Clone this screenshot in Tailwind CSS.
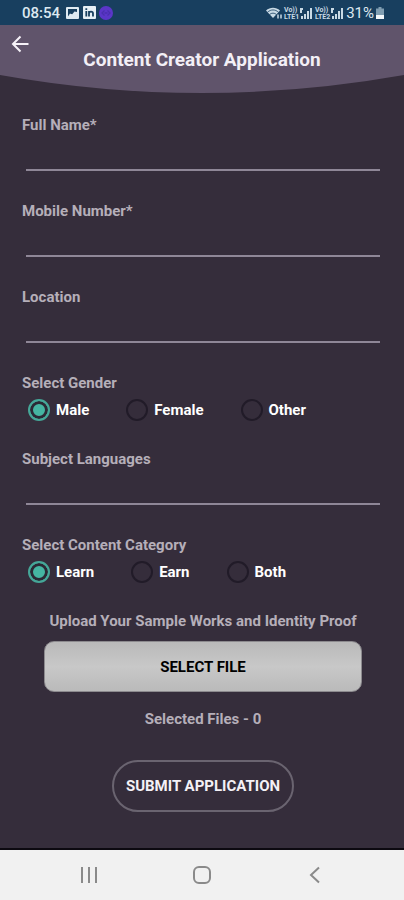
<!DOCTYPE html>
<html lang="en">
<head>
<meta charset="utf-8">
<meta name="viewport" content="width=device-width, initial-scale=1">
<title>Content Creator Application</title>
<script src="https://cdn.jsdelivr.net/npm/@tailwindcss/browser@4"></script>
</head>
<body class="flex min-h-screen flex-col bg-[#352d3b] font-[Roboto,sans-serif] text-[15px] leading-5 font-bold text-[#b5afb9]">
  <div class="flex h-[25px] items-center bg-[#183f5f] pr-[20px] pl-[22px] font-medium text-[#dce8f0]">
    <span>08:54</span>
    <svg class="ml-[6px] h-[12px] w-[13px]" viewBox="0 0 13 12" aria-hidden="true"><rect width="13" height="12" rx="1" fill="#dfeaf2"/><path d="M2 9.500V2h9v3L8.500 4.500 6 7.500 4 6.500z" fill="#183f5f"/><path d="M2 10l3-3 2 1 2-2 2 4z" fill="#dfeaf2"/></svg>
    <svg class="ml-[4px] h-[13px] w-[13px]" viewBox="0 0 13 13" aria-hidden="true"><rect width="13" height="13" rx="1" fill="#e6eff5"/><g stroke="#183f5f" stroke-width="1.800" fill="none"><path d="M3.300 5v5.500M3.300 2.200v1.700M6 10.500V5M6 7.500c0-2.500 4-2.500 4 0v3"/></g></svg>
    <svg class="ml-[3px] h-[14px] w-[14px]" viewBox="0 0 14 14" aria-hidden="true"><circle cx="7" cy="7" r="7" fill="#5a36c8"/><path d="M5.500 4.500L3 7l2.500 2.500M8.500 4.500L11 7 8.500 9.500M5.500 7h3" fill="none" stroke="#4a2fae" stroke-width="1.300"/></svg>
    <svg class="ml-auto h-[14px] w-[78px]" viewBox="0 0 78 14" aria-hidden="true">
      <path d="M0 4.500C4 .8 10 .8 14 4.500L7 12z" fill="#c9dae5"/>
      <path d="M1.500 6.200c3.500-3 7.500-3 11 0M3.500 8.500c2-1.800 5-1.800 7 0" fill="none" stroke="#183f5f" stroke-width=".8"/>
      <path d="M12 8.500v4M15 8.500v4" stroke="#c9dae5" stroke-width="1.500"/>
      <g fill="#c9dae5" font-family="Roboto, sans-serif" font-size="7" font-weight="700"><text x="18" y="6">Vo))</text><text x="18" y="13">LTE1</text><text x="49" y="6">Vo))</text><text x="49" y="13">LTE2</text></g>
      <path d="M35 2v5m-1-4h3M66 2v5m-1-4h3M36 10v3M39 8v5M42 5v8M45 2v11M67 10v3M70 8v5M73 5v8M76 2v11" stroke="#c9dae5" stroke-width="2"/>
    </svg>
    <span class="ml-[2px] font-normal">31%</span>
    <svg class="ml-[2px] h-[12px] w-[8px]" viewBox="0 0 8 12" aria-hidden="true"><path d="M2.500 0h3v1.500H8V12H0V1.500h2.500z" fill="#7f9db1"/><path d="M0 8h8v4H0z" fill="#f2f7fa"/></svg>
  </div>

  <header class="relative h-[68px]">
    <svg class="absolute inset-0 h-full w-full" viewBox="0 0 404 68" preserveAspectRatio="none" aria-hidden="true"><path d="M0 0H404V50Q303 68 202 68T0 50z" fill="#60546b"/></svg>
    <button type="button" aria-label="Back" class="absolute top-[8px] left-[9px] flex h-[22px] w-[22px] items-center justify-center">
      <svg class="h-[18px] w-[18px]" viewBox="0 0 18 18" fill="none" stroke="#f6f2f8" stroke-width="2" aria-hidden="true"><path d="M17.500 9H2M9.500 1.500L2 9l7.500 7.500"/></svg>
    </button>
    <h1 class="relative pt-[23px] text-center text-[19px] leading-6 text-[#f3eff6]">Content Creator Application</h1>
  </header>

  <main class="grow">
    <form class="pt-[22px] pr-[20px] pl-[22px]">
      <label for="name" class="block">Full Name*</label>
      <input id="name" type="text" class="mx-1 mb-[30px] block h-9 w-[calc(100%-8px)] border-b-2 border-[#8f8797] text-white outline-none">
      <label for="mobile" class="block">Mobile Number*</label>
      <input id="mobile" type="tel" class="mx-1 mb-[30px] block h-9 w-[calc(100%-8px)] border-b-2 border-[#8f8797] text-white outline-none">
      <label for="location" class="block">Location</label>
      <input id="location" type="text" class="mx-1 mb-[30px] block h-9 w-[calc(100%-8px)] border-b-2 border-[#8f8797] text-white outline-none">

      <fieldset class="mb-[28px]">
        <legend>Select Gender</legend>
        <div class="mt-[6px] ml-[6px] flex gap-[37px] text-white">
          <label class="flex items-center gap-[6px]"><input type="radio" name="gender" checked class="size-[22px] appearance-none rounded-full border-2 border-[#211b28] checked:border-[#45a798] checked:bg-[#45b5a2] checked:shadow-[inset_0_0_0_3px_#2b2935]">Male</label>
          <label class="flex items-center gap-[6px]"><input type="radio" name="gender" class="size-[22px] appearance-none rounded-full border-2 border-[#211b28] checked:border-[#45a798] checked:bg-[#45b5a2] checked:shadow-[inset_0_0_0_3px_#2b2935]">Female</label>
          <label class="flex items-center gap-[6px]"><input type="radio" name="gender" class="size-[22px] appearance-none rounded-full border-2 border-[#211b28] checked:border-[#45a798] checked:bg-[#45b5a2] checked:shadow-[inset_0_0_0_3px_#2b2935]">Other</label>
        </div>
      </fieldset>

      <label for="languages" class="block">Subject Languages</label>
      <input id="languages" type="text" class="mx-1 mb-[30px] block h-9 w-[calc(100%-8px)] border-b-2 border-[#8f8797] text-white outline-none">

      <fieldset class="mb-[28px]">
        <legend>Select Content Category</legend>
        <div class="mt-[6px] ml-[6px] flex gap-[37px] text-white">
          <label class="flex items-center gap-[6px]"><input type="radio" name="category" checked class="size-[22px] appearance-none rounded-full border-2 border-[#211b28] checked:border-[#45a798] checked:bg-[#45b5a2] checked:shadow-[inset_0_0_0_3px_#2b2935]">Learn</label>
          <label class="flex items-center gap-[6px]"><input type="radio" name="category" class="size-[22px] appearance-none rounded-full border-2 border-[#211b28] checked:border-[#45a798] checked:bg-[#45b5a2] checked:shadow-[inset_0_0_0_3px_#2b2935]">Earn</label>
          <label class="flex items-center gap-[6px]"><input type="radio" name="category" class="size-[22px] appearance-none rounded-full border-2 border-[#211b28] checked:border-[#45a798] checked:bg-[#45b5a2] checked:shadow-[inset_0_0_0_3px_#2b2935]">Both</label>
        </div>
      </fieldset>

      <div class="flex flex-col items-center">
        <p>Upload Your Sample Works and Identity Proof</p>
        <div class="mt-[10px] w-full px-[22px]">
          <button type="button" class="h-[51px] w-full rounded-[10px] border border-[#8c8a8e] bg-linear-to-b from-[#b9b9b9] via-[#c8c8c8] to-[#bababa] text-black">SELECT FILE</button>
        </div>
        <p class="mt-[17px]">Selected Files - 0</p>
        <button type="submit" class="mt-[31px] h-[52px] rounded-full border-2 border-[#6a6470] px-[12px] text-[#f4f1f6]">SUBMIT APPLICATION</button>
      </div>
    </form>
  </main>

  <nav class="flex h-[52px] items-center justify-center gap-[95px] border-t-2 border-[#0c0910] bg-[#f1f1f1]" aria-label="System">
    <button type="button" aria-label="Recents"><svg class="block h-[18px] w-[18px]" viewBox="0 0 18 18" stroke="#8a8a8a" stroke-width="2" aria-hidden="true"><path d="M2 1v16M9 1v16M16 1v16"/></svg></button>
    <button type="button" aria-label="Home"><svg class="block h-[18px] w-[18px]" viewBox="0 0 18 18" fill="none" stroke="#8a8a8a" stroke-width="2" aria-hidden="true"><rect x="1" y="1" width="16" height="16" rx="5"/></svg></button>
    <button type="button" aria-label="Back"><svg class="block h-[18px] w-[18px]" viewBox="0 0 18 18" fill="none" stroke="#8a8a8a" stroke-width="2" aria-hidden="true"><path d="M13 1.500L5 9l8 7.500"/></svg></button>
  </nav>
</body>
</html>
